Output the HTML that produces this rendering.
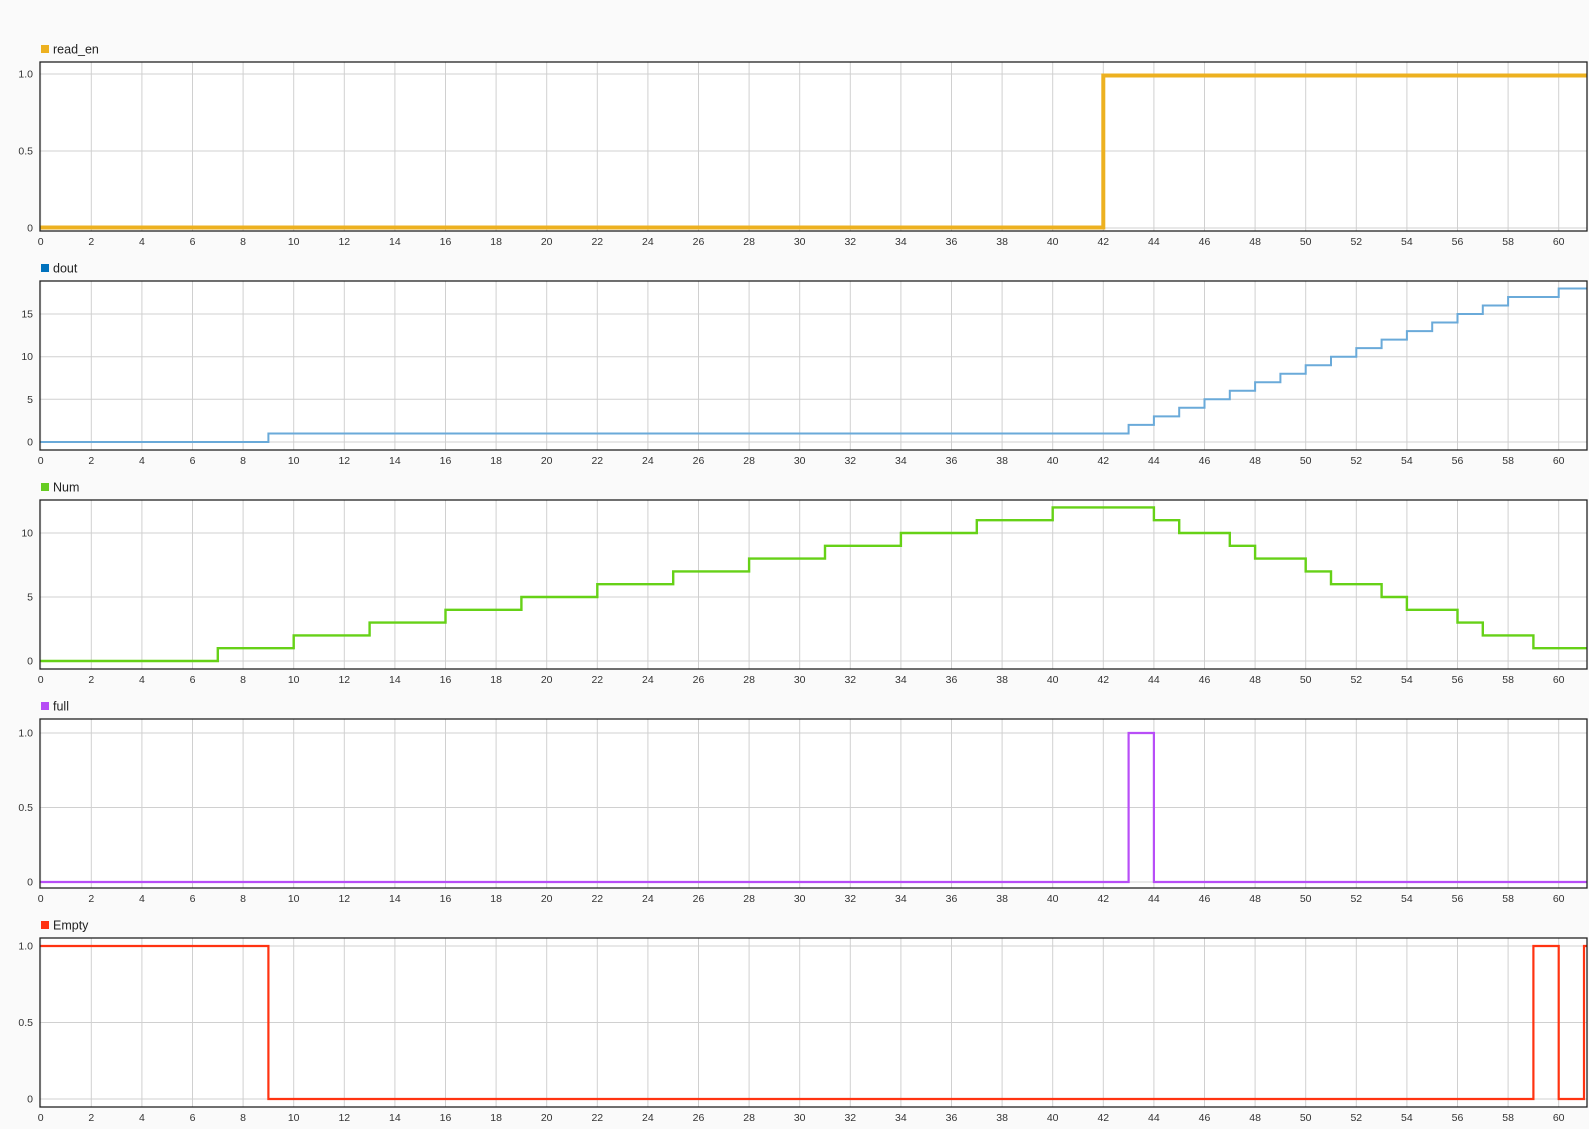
<!DOCTYPE html>
<html><head><meta charset="utf-8"><style>
html,body{margin:0;padding:0;background:#fafafa;}
svg{display:block;font-family:"Liberation Sans",Arial,sans-serif;}
.xl text{font-size:10.5px;fill:#333;text-anchor:middle;}
.yl{font-size:10.5px;fill:#333;text-anchor:end;}
.ttl{font-size:12.5px;fill:#222;}
.hg{stroke:#d0d0d0;stroke-width:1;}
.box{fill:none;stroke:#222;stroke-width:1.3;}
.sig{fill:none;stroke-linejoin:miter;}
</style></head><body>
<svg width="1589" height="1129" viewBox="0 0 1589 1129" xmlns="http://www.w3.org/2000/svg">
<defs>
<pattern id="vg" patternUnits="userSpaceOnUse" x="40.2" y="0" width="50.6" height="10"><rect x="0" y="0" width="1" height="10" fill="#d0d0d0"/></pattern>
</defs>
<rect width="1589" height="1129" fill="#fafafa"/>

<!-- Panel shared pieces -->
<g id="p0" transform="translate(0,62)">
<rect x="40" y="0" width="1547" height="169" fill="#fff"/>
<rect x="41" y="0" width="1546" height="169" fill="url(#vg)"/>
<line class="hg" x1="40" x2="1587" y1="12" y2="12"/><line class="hg" x1="40" x2="1587" y1="89" y2="89"/><line class="hg" x1="40" x2="1587" y1="166" y2="166"/>
<text class="yl" x="33" y="15.5">1.0</text><text class="yl" x="33" y="92.5">0.5</text><text class="yl" x="33" y="169.5">0</text>
<rect x="41" y="-17" width="8" height="8" fill="#EDB120"/><text class="ttl" x="53" y="-8.5">read_en</text>
<path class="sig" stroke="#EDB120" stroke-width="4" d="M40,165.5 H1103.3 V13.5 H1587"/>
<rect class="box" x="40" y="0" width="1547" height="169"/>
</g>

<g transform="translate(0,281)">
<rect x="40" y="0" width="1547" height="169" fill="#fff"/>
<rect x="41" y="0" width="1546" height="169" fill="url(#vg)"/>
<line class="hg" x1="40" x2="1587" y1="161" y2="161"/><line class="hg" x1="40" x2="1587" y1="118.3" y2="118.3"/><line class="hg" x1="40" x2="1587" y1="75.7" y2="75.7"/><line class="hg" x1="40" x2="1587" y1="33" y2="33"/>
<text class="yl" x="33" y="164.5">0</text><text class="yl" x="33" y="121.8">5</text><text class="yl" x="33" y="79.2">10</text><text class="yl" x="33" y="36.5">15</text>
<rect x="41" y="-17" width="8" height="8" fill="#0072BD"/><text class="ttl" x="53" y="-8.5">dout</text>
<path class="sig" stroke="#6aaad9" stroke-width="2" d="M40,161 H268.4 V152.5 H1128.6 V143.9 H1153.9 V135.4 H1179.2 V126.8 H1204.5 V118.3 H1229.8 V109.8 H1255.1 V101.2 H1280.4 V92.7 H1305.7 V84.2 H1331 V75.7 H1356.3 V67.1 H1381.6 V58.6 H1406.9 V50.1 H1432.2 V41.5 H1457.5 V33 H1482.8 V24.5 H1508.1 V16 H1558.7 V7.5 H1587"/>
<rect class="box" x="40" y="0" width="1547" height="169"/>
</g>

<g transform="translate(0,500)">
<rect x="40" y="0" width="1547" height="169" fill="#fff"/>
<rect x="41" y="0" width="1546" height="169" fill="url(#vg)"/>
<line class="hg" x1="40" x2="1587" y1="161" y2="161"/><line class="hg" x1="40" x2="1587" y1="97" y2="97"/><line class="hg" x1="40" x2="1587" y1="33" y2="33"/>
<text class="yl" x="33" y="164.5">0</text><text class="yl" x="33" y="100.5">5</text><text class="yl" x="33" y="36.5">10</text>
<rect x="41" y="-17" width="8" height="8" fill="#66CC22"/><text class="ttl" x="53" y="-8.5">Num</text>
<path class="sig" stroke="#66d117" stroke-width="2.4" d="M40,161 H217.8 V148.2 H293.7 V135.4 H369.6 V122.6 H445.5 V109.8 H521.4 V97 H597.3 V84.2 H673.2 V71.4 H749.1 V58.6 H825 V45.8 H900.9 V33 H976.8 V20.2 H1052.7 V7.4 H1153.9 V20.2 H1179.2 V33 H1229.8 V45.8 H1255.1 V58.6 H1305.7 V71.4 H1331 V84.2 H1381.6 V97 H1406.9 V109.8 H1457.5 V122.6 H1482.8 V135.4 H1533.4 V148.2 H1587"/>
<rect class="box" x="40" y="0" width="1547" height="169"/>
</g>

<g transform="translate(0,719)">
<rect x="40" y="0" width="1547" height="169" fill="#fff"/>
<rect x="41" y="0" width="1546" height="169" fill="url(#vg)"/>
<line class="hg" x1="40" x2="1587" y1="14" y2="14"/><line class="hg" x1="40" x2="1587" y1="88.5" y2="88.5"/><line class="hg" x1="40" x2="1587" y1="163" y2="163"/>
<text class="yl" x="33" y="17.5">1.0</text><text class="yl" x="33" y="92">0.5</text><text class="yl" x="33" y="166.5">0</text>
<rect x="41" y="-17" width="8" height="8" fill="#B64CF5"/><text class="ttl" x="53" y="-8.5">full</text>
<path class="sig" stroke="#b84ef7" stroke-width="2.2" d="M40,163 H1128.6 V14 H1153.9 V163 H1587"/>
<rect class="box" x="40" y="0" width="1547" height="169"/>
</g>

<g transform="translate(0,938)">
<rect x="40" y="0" width="1547" height="169" fill="#fff"/>
<rect x="41" y="0" width="1546" height="169" fill="url(#vg)"/>
<line class="hg" x1="40" x2="1587" y1="8" y2="8"/><line class="hg" x1="40" x2="1587" y1="84.5" y2="84.5"/><line class="hg" x1="40" x2="1587" y1="161" y2="161"/>
<text class="yl" x="33" y="11.5">1.0</text><text class="yl" x="33" y="88">0.5</text><text class="yl" x="33" y="164.5">0</text>
<rect x="41" y="-17" width="8" height="8" fill="#FF3311"/><text class="ttl" x="53" y="-8.5">Empty</text>
<path class="sig" stroke="#ff3311" stroke-width="2.2" d="M40,8 H268.4 V161 H1533.4 V8 H1558.7 V161 H1584 V8 H1587"/>
<rect class="box" x="40" y="0" width="1547" height="169"/>
</g>

<!-- X tick labels for each panel -->
<g class="xl" transform="translate(0,245)">
<text x="40.7">0</text><text x="91.3">2</text><text x="141.9">4</text><text x="192.5">6</text><text x="243.1">8</text><text x="293.7">10</text><text x="344.3">12</text><text x="394.9">14</text><text x="445.5">16</text><text x="496.1">18</text><text x="546.7">20</text><text x="597.3">22</text><text x="647.9">24</text><text x="698.5">26</text><text x="749.1">28</text><text x="799.7">30</text><text x="850.3">32</text><text x="900.9">34</text><text x="951.5">36</text><text x="1002.1">38</text><text x="1052.7">40</text><text x="1103.3">42</text><text x="1153.9">44</text><text x="1204.5">46</text><text x="1255.1">48</text><text x="1305.7">50</text><text x="1356.3">52</text><text x="1406.9">54</text><text x="1457.5">56</text><text x="1508.1">58</text><text x="1558.7">60</text>
</g>
<g class="xl" transform="translate(0,464)">
<text x="40.7">0</text><text x="91.3">2</text><text x="141.9">4</text><text x="192.5">6</text><text x="243.1">8</text><text x="293.7">10</text><text x="344.3">12</text><text x="394.9">14</text><text x="445.5">16</text><text x="496.1">18</text><text x="546.7">20</text><text x="597.3">22</text><text x="647.9">24</text><text x="698.5">26</text><text x="749.1">28</text><text x="799.7">30</text><text x="850.3">32</text><text x="900.9">34</text><text x="951.5">36</text><text x="1002.1">38</text><text x="1052.7">40</text><text x="1103.3">42</text><text x="1153.9">44</text><text x="1204.5">46</text><text x="1255.1">48</text><text x="1305.7">50</text><text x="1356.3">52</text><text x="1406.9">54</text><text x="1457.5">56</text><text x="1508.1">58</text><text x="1558.7">60</text>
</g>
<g class="xl" transform="translate(0,683)">
<text x="40.7">0</text><text x="91.3">2</text><text x="141.9">4</text><text x="192.5">6</text><text x="243.1">8</text><text x="293.7">10</text><text x="344.3">12</text><text x="394.9">14</text><text x="445.5">16</text><text x="496.1">18</text><text x="546.7">20</text><text x="597.3">22</text><text x="647.9">24</text><text x="698.5">26</text><text x="749.1">28</text><text x="799.7">30</text><text x="850.3">32</text><text x="900.9">34</text><text x="951.5">36</text><text x="1002.1">38</text><text x="1052.7">40</text><text x="1103.3">42</text><text x="1153.9">44</text><text x="1204.5">46</text><text x="1255.1">48</text><text x="1305.7">50</text><text x="1356.3">52</text><text x="1406.9">54</text><text x="1457.5">56</text><text x="1508.1">58</text><text x="1558.7">60</text>
</g>
<g class="xl" transform="translate(0,902)">
<text x="40.7">0</text><text x="91.3">2</text><text x="141.9">4</text><text x="192.5">6</text><text x="243.1">8</text><text x="293.7">10</text><text x="344.3">12</text><text x="394.9">14</text><text x="445.5">16</text><text x="496.1">18</text><text x="546.7">20</text><text x="597.3">22</text><text x="647.9">24</text><text x="698.5">26</text><text x="749.1">28</text><text x="799.7">30</text><text x="850.3">32</text><text x="900.9">34</text><text x="951.5">36</text><text x="1002.1">38</text><text x="1052.7">40</text><text x="1103.3">42</text><text x="1153.9">44</text><text x="1204.5">46</text><text x="1255.1">48</text><text x="1305.7">50</text><text x="1356.3">52</text><text x="1406.9">54</text><text x="1457.5">56</text><text x="1508.1">58</text><text x="1558.7">60</text>
</g>
<g class="xl" transform="translate(0,1121)">
<text x="40.7">0</text><text x="91.3">2</text><text x="141.9">4</text><text x="192.5">6</text><text x="243.1">8</text><text x="293.7">10</text><text x="344.3">12</text><text x="394.9">14</text><text x="445.5">16</text><text x="496.1">18</text><text x="546.7">20</text><text x="597.3">22</text><text x="647.9">24</text><text x="698.5">26</text><text x="749.1">28</text><text x="799.7">30</text><text x="850.3">32</text><text x="900.9">34</text><text x="951.5">36</text><text x="1002.1">38</text><text x="1052.7">40</text><text x="1103.3">42</text><text x="1153.9">44</text><text x="1204.5">46</text><text x="1255.1">48</text><text x="1305.7">50</text><text x="1356.3">52</text><text x="1406.9">54</text><text x="1457.5">56</text><text x="1508.1">58</text><text x="1558.7">60</text>
</g>
</svg>
</body></html>
